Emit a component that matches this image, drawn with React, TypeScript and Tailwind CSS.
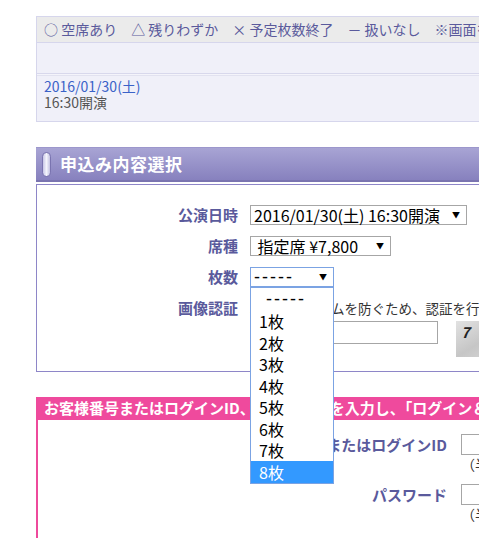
import React from "react";

const font = { fontFamily: '"Noto Sans CJK JP", "Noto Sans", sans-serif' };
const dashFont = { fontFamily: '"Liberation Sans", sans-serif' };

function FakeSelect({ text, width, focused, dashes, children }: { text: string; width: string; focused?: boolean; dashes?: boolean; children?: React.ReactNode }) {
  return (
    <div
      className={`relative h-[20px] ${width} bg-white border flex items-center justify-between pl-[3px] pr-[6px] ${
        focused ? "border-[#7ba3e3]" : "border-[#a6a6a6]"
      }`}
    >
      <span
        className={`leading-none text-black whitespace-pre ${dashes ? "text-[18px] tracking-[2px]" : "text-[16px]"}`}
        style={dashes ? dashFont : undefined}
      >
        {text}
      </span>
      <span className="text-[8px] leading-none text-black">▼</span>
      {children}
    </div>
  );
}

export default function App() {
  const counts = ["1枚", "2枚", "3枚", "4枚", "5枚", "6枚", "7枚", "8枚"];
  return (
    <div className="w-[479px] h-[538px] overflow-hidden bg-white" style={font}>
      <div className="ml-[36px] w-[700px] pt-[16px]">
        {/* legend box */}
        <div className="border border-[#d6d6ec]">
          <div className="h-[26px] bg-[#ebebeb] border-b border-[#d6d6ec] flex items-center pl-[7px] text-[14px] text-[#5a5a9c] whitespace-nowrap">
            ○ 空席あり　△ 残りわずか　× 予定枚数終了　－ 扱いなし　※画面を更新して最新の状況をご確認ください
          </div>
          <div className="h-[31px] bg-[#f0f0f9] border-b border-[#d8d8ec]" />
          <div className="h-[2px] bg-[#f4f4fb] border-b border-[#e2e2f0]" />
          <div className="h-[45px] bg-[#f0f0f9] pl-[7px] pt-[2px] text-[14px] leading-[16px]">
            <div className="text-[#3a62c8]">2016/01/30(土)</div>
            <div className="text-[#555]">16:30開演</div>
          </div>
        </div>

        {/* section header */}
        <div className="mt-[25px] h-[35px] bg-gradient-to-b from-[#a8a4d4] to-[#8781be] border-t border-[#9c97cc] border-b-2 border-b-[#7a74b0] flex items-center">
          <div className="ml-[6px] w-[9px] h-[25px] rounded-full bg-gradient-to-r from-[#c8c6e6] via-[#f4f4fc] to-[#c4c2e2] border border-[#7a74b0]" />
          <div className="ml-[9px] text-[17px] font-bold text-white tracking-[0.5px]">申込み内容選択</div>
        </div>

        {/* form box */}
        <div className="mt-[2px] border-l border-t border-b border-[#8e86c8] pt-[20px] pb-[14px]">
          <div className="grid grid-cols-[201px_1fr] gap-x-[12px] gap-y-[11px] items-center">
            <div className="text-right text-[15px] leading-[20px] font-bold text-[#5a5a9c]">公演日時</div>
            <FakeSelect text="2016/01/30(土) 16:30開演" width="w-[217px]" />

            <div className="text-right text-[15px] leading-[20px] font-bold text-[#5a5a9c]">席種</div>
            <FakeSelect text=" 指定席 ¥7,800" width="w-[141px]" />

            <div className="text-right text-[15px] leading-[20px] font-bold text-[#5a5a9c]">枚数</div>
            <div className="relative z-10">
              <FakeSelect text="-----" width="w-[84px]" focused dashes>
                <div className="absolute left-[-1px] top-[19px] w-[84px] bg-white border border-[#7ba3e3] pt-[1px]">
                  <div className="h-[21.5px] flex items-center pl-[15px] text-[18px] tracking-[2px] text-black" style={dashFont}>
                    -----
                  </div>
                  {counts.map((c) => (
                    <div
                      key={c}
                      className={`h-[21.5px] flex items-center pl-[8px] text-[16px] ${
                        c === "8枚" ? "bg-[#3399ff] text-white" : "text-black"
                      }`}
                    >
                      {c}
                    </div>
                  ))}
                </div>
              </FakeSelect>
            </div>

            <div className="self-start text-right text-[15px] font-bold text-[#5a5a9c] leading-[20px]">画像認証</div>
            <div className="self-start">
              <div className="text-[13.5px] leading-[20px] text-[#333] whitespace-nowrap">機械的なスパムを防ぐため、認証を行います。</div>
              <div className="flex items-start mt-[3px]">
                <div className="w-[188px] h-[23px] border border-[#a6a6a6] bg-white" />
                <div className="ml-[18px] w-[60px] h-[36px] bg-gradient-to-br from-[#e2e2e2] via-[#c6c6c6] to-[#dcdcdc] pl-[5px] pt-[2px] text-[15px] font-bold italic text-[#222] leading-[18px]">
                  7
                </div>
              </div>
            </div>
          </div>
        </div>

        {/* login section */}
        <div className="mt-[25px] border-l-2 border-[#ee4a9c] h-[200px]">
          <div className="h-[23px] bg-[#ef4a9d] flex items-center pl-[6px] text-[15px] font-bold text-white whitespace-nowrap">
            お客様番号またはログインID、パスワードを入力し、「ログイン＆申込」ボタンを押してください。
          </div>
          <div className="grid grid-cols-[409px_1fr] gap-x-[14px] pt-[14px]">
            <div className="text-right text-[15px] font-bold text-[#5a5a9c] leading-[21px]">お客様番号またはログインID</div>
            <div>
              <div className="w-[150px] h-[21px] border border-[#a6a6a6]" />
              <div className="text-[14px] leading-[19px] text-[#333]">（半角英数字）</div>
            </div>
            <div className="mt-[10px] text-right text-[15px] font-bold text-[#5a5a9c] leading-[21px]">パスワード</div>
            <div className="mt-[10px]">
              <div className="w-[150px] h-[21px] border border-[#a6a6a6]" />
              <div className="text-[14px] leading-[19px] text-[#333]">（半角英数字）</div>
            </div>
          </div>
        </div>
      </div>
    </div>
  );
}
